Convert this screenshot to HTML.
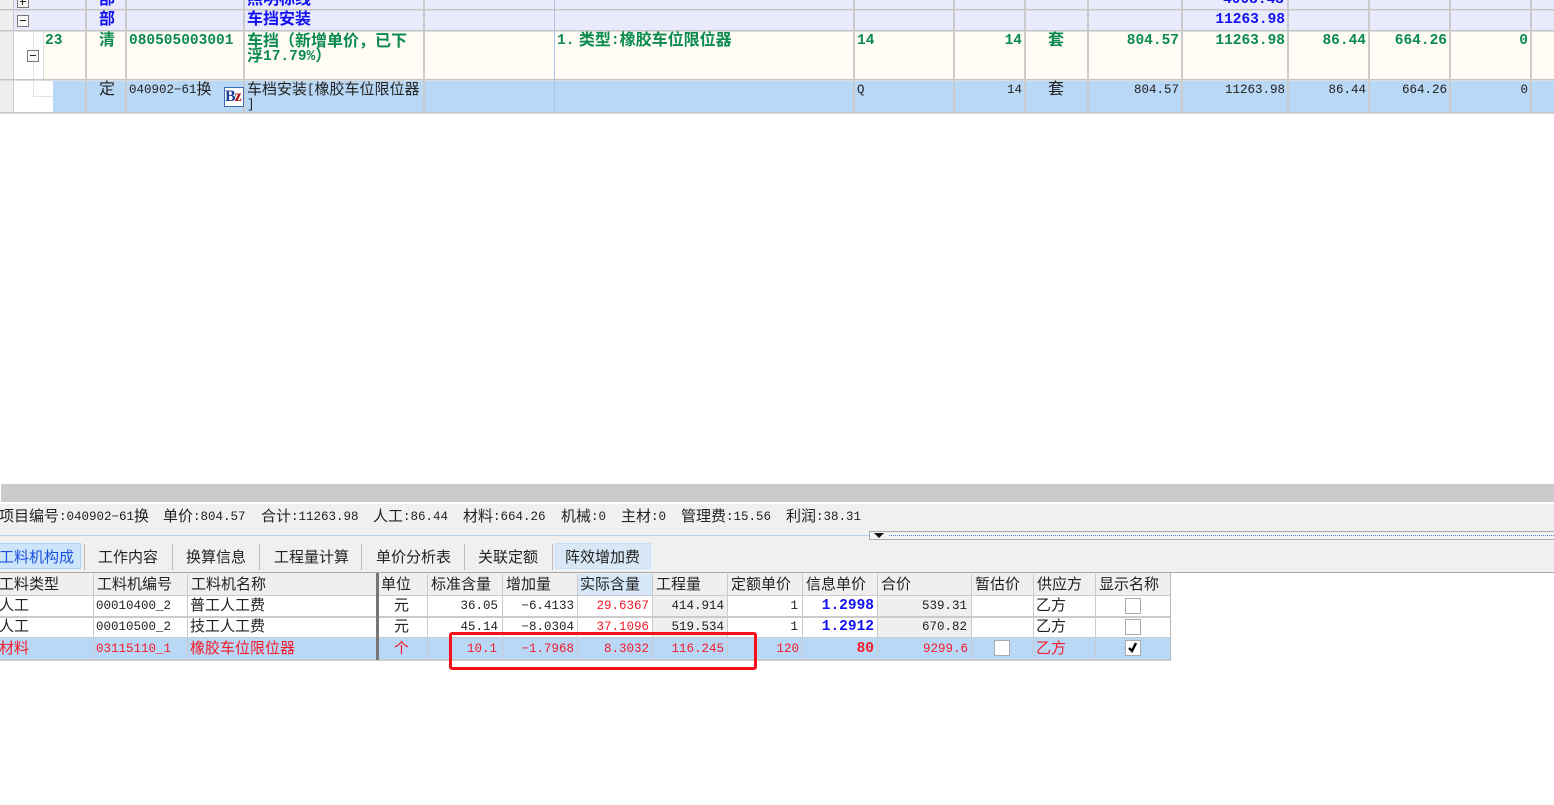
<!DOCTYPE html>
<html><head><meta charset="utf-8"><style>
html,body{margin:0;padding:0;width:1554px;height:805px;overflow:hidden;background:#fff}
body{position:relative;font-family:"Liberation Sans","Noto Sans CJK SC",sans-serif;font-size:15px;color:#222}
div{position:absolute;box-sizing:border-box}
.t{white-space:nowrap;line-height:16px;height:16px}
.b{font-weight:700}
.g{color:#0a8a4c}.bl{color:#1010f0}.r{color:#f51a2a}
i{font-style:normal;font-family:"Liberation Mono",monospace;font-size:12.5px;position:relative;top:-1px}
.b i{font-size:14.5px}
.v{width:2px;background:#cbcbcb}
.h{left:0;width:1554px;height:1px;background:#c4c4c4;box-shadow:0 1px 0 #dcdcdc}
.sq{width:16px;height:16px;background:#fff;border:1px solid #aaa}
.pm{width:12px;height:12px;border:1px solid #777;background:#f6f6f6}
.pm:after{content:"";position:absolute;left:2px;top:4px;width:6px;height:1px;background:#222}
.plus:before{content:"";position:absolute;left:4px;top:2px;width:1px;height:6px;background:#222}
.s{width:1px;height:26px;background:#bbb;top:544px}
</style></head><body>

<!-- top grid -->
<div style="left:0;top:0;width:13px;height:113px;background:#efefef"></div>
<div style="left:13px;top:0;width:1541px;height:31px;background:#e9ebfd"></div>
<div style="left:13px;top:31px;width:30px;height:49px;background:#fff"></div>
<div style="left:43px;top:31px;width:1511px;height:49px;background:#fffcf6"></div>
<div style="left:13px;top:80px;width:40px;height:33px;background:#fff"></div>
<div style="left:53px;top:80px;width:1501px;height:33px;background:#b9d8f5"></div>
<div style="left:33px;top:31px;width:1px;height:65px;background:#e4e4e4"></div>
<div style="left:33px;top:96px;width:20px;height:1px;background:#e4e4e4"></div>
<div style="left:13px;top:0;width:1px;height:113px;background:#c8c8c8"></div>
<div style="left:43px;top:31px;width:1px;height:48px;background:#ddd"></div>
<div class="h" style="top:9px"></div>
<div class="h" style="top:30px"></div>
<div class="h" style="top:79px"></div>
<div class="h" style="top:112px"></div>
<div class="v" style="left:85px;top:0;height:113px"></div>
<div class="v" style="left:125px;top:0;height:113px"></div>
<div class="v" style="left:243px;top:0;height:113px"></div>
<div class="v" style="left:423px;top:0;height:113px"></div>
<div style="left:554px;top:0;height:113px;width:1px;background:#a9c4e6"></div>
<div class="v" style="left:853px;top:0;height:113px"></div>
<div class="v" style="left:953px;top:0;height:113px"></div>
<div class="v" style="left:1024px;top:0;height:113px"></div>
<div class="v" style="left:1087px;top:0;height:113px"></div>
<div class="v" style="left:1181px;top:0;height:113px"></div>
<div class="v" style="left:1287px;top:0;height:113px"></div>
<div class="v" style="left:1368px;top:0;height:113px"></div>
<div class="v" style="left:1449px;top:0;height:113px"></div>
<div class="v" style="left:1530px;top:0;height:113px"></div>

<div class="pm plus" style="left:17px;top:-4px"></div>
<div class="pm" style="left:17px;top:15px"></div>
<div class="pm" style="left:27px;top:50px"></div>

<div class="t b bl" style="left:99px;top:-8px;font-size:16px">部</div>
<div class="t b bl" style="left:247px;top:-8px;font-size:16px">照明标线</div>
<div class="t b bl" style="right:270px;top:-8px"><i>4008.48</i></div>
<div class="t b bl" style="left:99px;top:12px;font-size:16px">部</div>
<div class="t b bl" style="left:247px;top:12px;font-size:16px">车挡安装</div>
<div class="t b bl" style="right:269px;top:12px"><i>11263.98</i></div>

<div class="t b g" style="left:45px;top:33px"><i>23</i></div>
<div class="t b g" style="left:99px;top:33px;font-size:16px">清</div>
<div class="t b g" style="left:129px;top:33px"><i>080505003001</i></div>
<div class="t b g" style="left:247px;top:34px;font-size:16px;line-height:15px">车挡（新增单价，已下</div>
<div class="t b g" style="left:247px;top:49px;font-size:16px;line-height:15px">浮<i>17.79%</i>）</div>
<div class="t b g" style="left:557px;top:33px;font-size:16px"><i>1.</i> 类型<i>:</i>橡胶车位限位器</div>
<div class="t b g" style="left:857px;top:33px"><i>14</i></div>
<div class="t b g" style="right:532px;top:33px"><i>14</i></div>
<div class="t b g" style="left:1048px;top:33px;font-size:16px">套</div>
<div class="t b g" style="right:375px;top:33px"><i>804.57</i></div>
<div class="t b g" style="right:269px;top:33px"><i>11263.98</i></div>
<div class="t b g" style="right:188px;top:33px"><i>86.44</i></div>
<div class="t b g" style="right:107px;top:33px"><i>664.26</i></div>
<div class="t b g" style="right:26px;top:33px"><i>0</i></div>

<div class="t" style="left:99px;top:82px;font-size:16px">定</div>
<div class="t" style="left:129px;top:82px"><i>040902−61</i>换</div>
<div style="left:224px;top:87px;width:20px;height:20px;background:#fff;border:1px solid #3b6ab0;font:700 16px/18px 'Liberation Serif',serif;letter-spacing:-1px;white-space:nowrap;overflow:hidden;color:#1c3f94">B<span style="color:#b01818">z</span></div>
<div class="t" style="left:247px;top:82px">车档安装<i>[</i>橡胶车位限位器</div>
<div class="t" style="left:247px;top:97px;line-height:15px"><i>]</i></div>
<div class="t" style="left:857px;top:82px"><i>Q</i></div>
<div class="t" style="right:532px;top:82px"><i>14</i></div>
<div class="t" style="left:1048px;top:82px;font-size:16px">套</div>
<div class="t" style="right:375px;top:82px"><i>804.57</i></div>
<div class="t" style="right:269px;top:82px"><i>11263.98</i></div>
<div class="t" style="right:188px;top:82px"><i>86.44</i></div>
<div class="t" style="right:107px;top:82px"><i>664.26</i></div>
<div class="t" style="right:26px;top:82px"><i>0</i></div>

<!-- scrollbar and panel -->
<div style="left:1px;top:484px;width:1553px;height:18px;background:#cbcbcb"></div>
<div style="left:0;top:504px;width:1554px;height:68px;background:#f0f0f0"></div>
<div style="left:0;top:535px;width:870px;height:1px;background:#b4d2ee"></div>
<div style="left:869px;top:531px;width:685px;height:9px;background:#f4f4f4;border:1px solid #aaa;border-right:0"></div>
<div style="left:889px;top:535px;width:665px;height:0;border-top:1px dotted #3f93dd"></div>
<div style="left:874px;top:533px;width:0;height:0;border-left:5px solid transparent;border-right:5px solid transparent;border-top:5px solid #111"></div>

<div class="t" style="left:-1px;top:509px">项目编号<i>:040902−61</i>换</div>
<div class="t" style="left:163px;top:509px">单价<i>:804.57</i></div>
<div class="t" style="left:261px;top:509px">合计<i>:11263.98</i></div>
<div class="t" style="left:373px;top:509px">人工<i>:86.44</i></div>
<div class="t" style="left:463px;top:509px">材料<i>:664.26</i></div>
<div class="t" style="left:561px;top:509px">机械<i>:0</i></div>
<div class="t" style="left:621px;top:509px">主材<i>:0</i></div>
<div class="t" style="left:681px;top:509px">管理费<i>:15.56</i></div>
<div class="t" style="left:786px;top:509px">利润<i>:38.31</i></div>

<!-- tabs -->
<div style="left:-1px;top:543px;width:82px;height:26px;background:#cde5fb;border:1px solid #a8d4f7"></div>
<div class="t" style="left:-1px;top:550px;color:#1a50e0">工料机构成</div>
<div class="s" style="left:84px"></div>
<div class="t" style="left:98px;top:550px">工作内容</div>
<div class="s" style="left:172px"></div>
<div class="t" style="left:186px;top:550px">换算信息</div>
<div class="s" style="left:259px"></div>
<div class="t" style="left:274px;top:550px">工程量计算</div>
<div class="s" style="left:361px"></div>
<div class="t" style="left:376px;top:550px">单价分析表</div>
<div class="s" style="left:464px"></div>
<div class="t" style="left:478px;top:550px">关联定额</div>
<div class="s" style="left:552px"></div>
<div style="left:555px;top:543px;width:96px;height:26px;background:#d9e8f6;border:1px solid #c8e0f4"></div>
<div class="t" style="left:565px;top:550px">阵效增加费</div>

<!-- bottom grid -->
<div style="left:0;top:572px;width:1554px;height:1px;background:#a8a8a8"></div>
<div style="left:0;top:573px;width:1171px;height:22px;background:#efefef"></div>
<div style="left:577px;top:574px;width:75px;height:21px;background:#d6e7f7"></div>
<div style="left:877px;top:596px;width:94px;height:41px;background:#efefef"></div>
<div style="left:652px;top:596px;width:75px;height:41px;background:#efefef"></div>
<div style="left:0;top:638px;width:1171px;height:22px;background:#b9d8f5"></div>
<div style="left:0;top:595px;width:1171px;height:1px;background:#cbcbcb"></div>
<div style="left:0;top:616px;width:1171px;height:2px;background:#cbcbcb"></div>
<div style="left:0;top:637px;width:1171px;height:1px;background:#cbcbcb"></div>
<div style="left:0;top:659px;width:1171px;height:2px;background:#cbcbcb"></div>
<div class="v" style="left:93px;top:574px;height:86px;width:1px"></div>
<div class="v" style="left:187px;top:574px;height:86px;width:1px"></div>
<div style="left:376px;top:573px;height:87px;width:3px;background:#777"></div>
<div class="v" style="left:427px;top:574px;height:86px;width:1px"></div>
<div class="v" style="left:502px;top:574px;height:86px;width:1px"></div>
<div class="v" style="left:577px;top:574px;height:86px;width:1px"></div>
<div class="v" style="left:652px;top:574px;height:86px;width:1px"></div>
<div class="v" style="left:727px;top:574px;height:86px;width:1px"></div>
<div class="v" style="left:802px;top:574px;height:86px;width:1px"></div>
<div class="v" style="left:877px;top:574px;height:86px;width:1px"></div>
<div class="v" style="left:971px;top:574px;height:86px;width:1px"></div>
<div class="v" style="left:1033px;top:574px;height:86px;width:1px"></div>
<div class="v" style="left:1095px;top:574px;height:86px;width:1px"></div>
<div style="left:1170px;top:573px;height:87px;width:1px;background:#b5b5b5"></div>

<div class="t" style="left:-1px;top:577px">工料类型</div>
<div class="t" style="left:97px;top:577px">工料机编号</div>
<div class="t" style="left:191px;top:577px">工料机名称</div>
<div class="t" style="left:381px;top:577px">单位</div>
<div class="t" style="left:431px;top:577px">标准含量</div>
<div class="t" style="left:506px;top:577px">增加量</div>
<div class="t" style="left:580px;top:577px">实际含量</div>
<div class="t" style="left:656px;top:577px">工程量</div>
<div class="t" style="left:731px;top:577px">定额单价</div>
<div class="t" style="left:806px;top:577px">信息单价</div>
<div class="t" style="left:881px;top:577px">合价</div>
<div class="t" style="left:975px;top:577px">暂估价</div>
<div class="t" style="left:1037px;top:577px">供应方</div>
<div class="t" style="left:1099px;top:577px">显示名称</div>

<div class="t" style="left:-1px;top:598px">人工</div>
<div class="t" style="left:96px;top:598px"><i>00010400_2</i></div>
<div class="t" style="left:190px;top:598px">普工人工费</div>
<div class="t" style="left:394px;top:598px">元</div>
<div class="t" style="right:1056px;top:598px"><i>36.05</i></div>
<div class="t" style="right:980px;top:598px"><i>−6.4133</i></div>
<div class="t r" style="right:905px;top:598px"><i>29.6367</i></div>
<div class="t" style="right:830px;top:598px"><i>414.914</i></div>
<div class="t" style="right:756px;top:598px"><i>1</i></div>
<div class="t b bl" style="right:680px;top:598px"><i>1.2998</i></div>
<div class="t" style="right:587px;top:598px"><i>539.31</i></div>
<div class="t" style="left:1036px;top:598px">乙方</div>
<div class="sq" style="left:1125px;top:598px"></div>

<div class="t" style="left:-1px;top:619px">人工</div>
<div class="t" style="left:96px;top:619px"><i>00010500_2</i></div>
<div class="t" style="left:190px;top:619px">技工人工费</div>
<div class="t" style="left:394px;top:619px">元</div>
<div class="t" style="right:1056px;top:619px"><i>45.14</i></div>
<div class="t" style="right:980px;top:619px"><i>−8.0304</i></div>
<div class="t r" style="right:905px;top:619px"><i>37.1096</i></div>
<div class="t" style="right:830px;top:619px"><i>519.534</i></div>
<div class="t" style="right:756px;top:619px"><i>1</i></div>
<div class="t b bl" style="right:680px;top:619px"><i>1.2912</i></div>
<div class="t" style="right:587px;top:619px"><i>670.82</i></div>
<div class="t" style="left:1036px;top:619px">乙方</div>
<div class="sq" style="left:1125px;top:619px"></div>

<div class="t r" style="left:-1px;top:641px">材料</div>
<div class="t r" style="left:96px;top:641px"><i>03115110_1</i></div>
<div class="t r" style="left:190px;top:641px">橡胶车位限位器</div>
<div class="t r" style="left:394px;top:641px">个</div>
<div class="t r" style="right:1057px;top:641px"><i>10.1</i></div>
<div class="t r" style="right:980px;top:641px"><i>−1.7968</i></div>
<div class="t r" style="right:905px;top:641px"><i>8.3032</i></div>
<div class="t r" style="right:830px;top:641px"><i>116.245</i></div>
<div class="t r" style="right:755px;top:641px"><i>120</i></div>
<div class="t b r" style="right:680px;top:641px"><i>80</i></div>
<div class="t r" style="right:586px;top:641px"><i>9299.6</i></div>
<div class="sq" style="left:994px;top:640px"></div>
<div class="t r" style="left:1036px;top:641px">乙方</div>
<div class="sq" style="left:1125px;top:640px"></div>
<svg style="position:absolute;left:1125px;top:640px" width="16" height="16"><path d="M4 8 L7 11 L11 3" fill="none" stroke="#000" stroke-width="2.4"/></svg>

<!-- red annotation -->
<div style="left:449px;top:632px;width:308px;height:38px;border:3px solid #f5101a;border-radius:3px"></div>
</body></html>
